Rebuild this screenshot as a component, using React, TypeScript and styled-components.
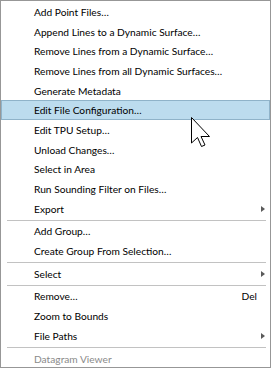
import styled, { createGlobalStyle } from 'styled-components';

type MenuEntry =
  | { kind: 'item'; label: string; shortcut?: string; submenu?: boolean; active?: boolean; disabled?: boolean }
  | { kind: 'separator' };

const entries: MenuEntry[] = [
  { kind: 'item', label: 'Add Point Files…' },
  { kind: 'item', label: 'Append Lines to a Dynamic Surface…' },
  { kind: 'item', label: 'Remove Lines from a Dynamic Surface…' },
  { kind: 'item', label: 'Remove Lines from all Dynamic Surfaces…' },
  { kind: 'item', label: 'Generate Metadata' },
  { kind: 'item', label: 'Edit File Configuration…', active: true },
  { kind: 'item', label: 'Edit TPU Setup…' },
  { kind: 'item', label: 'Unload Changes…' },
  { kind: 'item', label: 'Select in Area' },
  { kind: 'item', label: 'Run Sounding Filter on Files…' },
  { kind: 'item', label: 'Export', submenu: true },
  { kind: 'separator' },
  { kind: 'item', label: 'Add Group…' },
  { kind: 'item', label: 'Create Group From Selection…' },
  { kind: 'separator' },
  { kind: 'item', label: 'Select', submenu: true },
  { kind: 'separator' },
  { kind: 'item', label: 'Remove…', shortcut: 'Del' },
  { kind: 'item', label: 'Zoom to Bounds' },
  { kind: 'item', label: 'File Paths', submenu: true },
  { kind: 'separator' },
  { kind: 'item', label: 'Datagram Viewer', disabled: true },
];

const GlobalStyle = createGlobalStyle`
  html, body {
    margin: 0;
    padding: 0;
    background: #ffffff;
  }
  * {
    box-sizing: border-box;
  }
`;

const Menu = styled.div`
  position: relative;
  width: 271px;
  height: 368px;
  border: 1px solid #979797;
  background: #ffffff;
  padding: 1px 0 0 0;
  display: flex;
  flex-direction: column;
  font-family: Lato, 'Noto Sans', sans-serif;
  font-size: 10.2px;
  color: #000000;
  overflow: hidden;
`;

const Row = styled.div<{ $active?: boolean; $disabled?: boolean }>`
  height: 19.7px;
  flex: none;
  display: flex;
  align-items: center;
  padding-left: 32px;
  border: 1px solid ${(p) => (p.$active ? '#8fb3c9' : 'transparent')};
  background: ${(p) => (p.$active ? '#bcdcee' : 'transparent')};
  color: ${(p) => (p.$disabled ? '#8a8a8a' : '#000000')};
  white-space: nowrap;
`;

const Label = styled.span`
  flex: 1;
`;

const Shortcut = styled.span`
  margin-right: 0;
`;

const Trail = styled.span`
  width: 12px;
  flex: none;
  display: flex;
  align-items: center;
  padding-left: 4px;
`;

const Arrow = styled.span`
  width: 0;
  height: 0;
  border-top: 3.5px solid transparent;
  border-bottom: 3.5px solid transparent;
  border-left: 4px solid #5a5a5a;
`;

const Separator = styled.div`
  height: 3px;
  flex: none;
  display: flex;
  align-items: center;
  padding: 0 4px 0 6px;

  &::after {
    content: '';
    flex: 1;
    height: 1px;
    background: #c2c2c2;
  }
`;

const Cursor = styled.svg`
  position: absolute;
  left: 189px;
  top: 115px;
  pointer-events: none;
`;

export default function App() {
  return (
    <>
      <GlobalStyle />
      <Menu>
        {entries.map((e, i) =>
          e.kind === 'separator' ? (
            <Separator key={i} />
          ) : (
            <Row key={i} $active={e.active} $disabled={e.disabled}>
              <Label>{e.label}</Label>
              {e.shortcut && <Shortcut>{e.shortcut}</Shortcut>}
              <Trail>{e.submenu && <Arrow />}</Trail>
            </Row>
          )
        )}
        <Cursor width="22" height="33" viewBox="0 0 22 33">
          <path
            d="M1.5 1.5 L1.5 27 L7.5 21.5 L11.5 30.5 L15 29 L11 20.5 L19.5 20.5 Z"
            fill="#ffffff"
            stroke="#000000"
            strokeWidth="1"
            strokeLinejoin="miter"
          />
        </Cursor>
      </Menu>
    </>
  );
}
